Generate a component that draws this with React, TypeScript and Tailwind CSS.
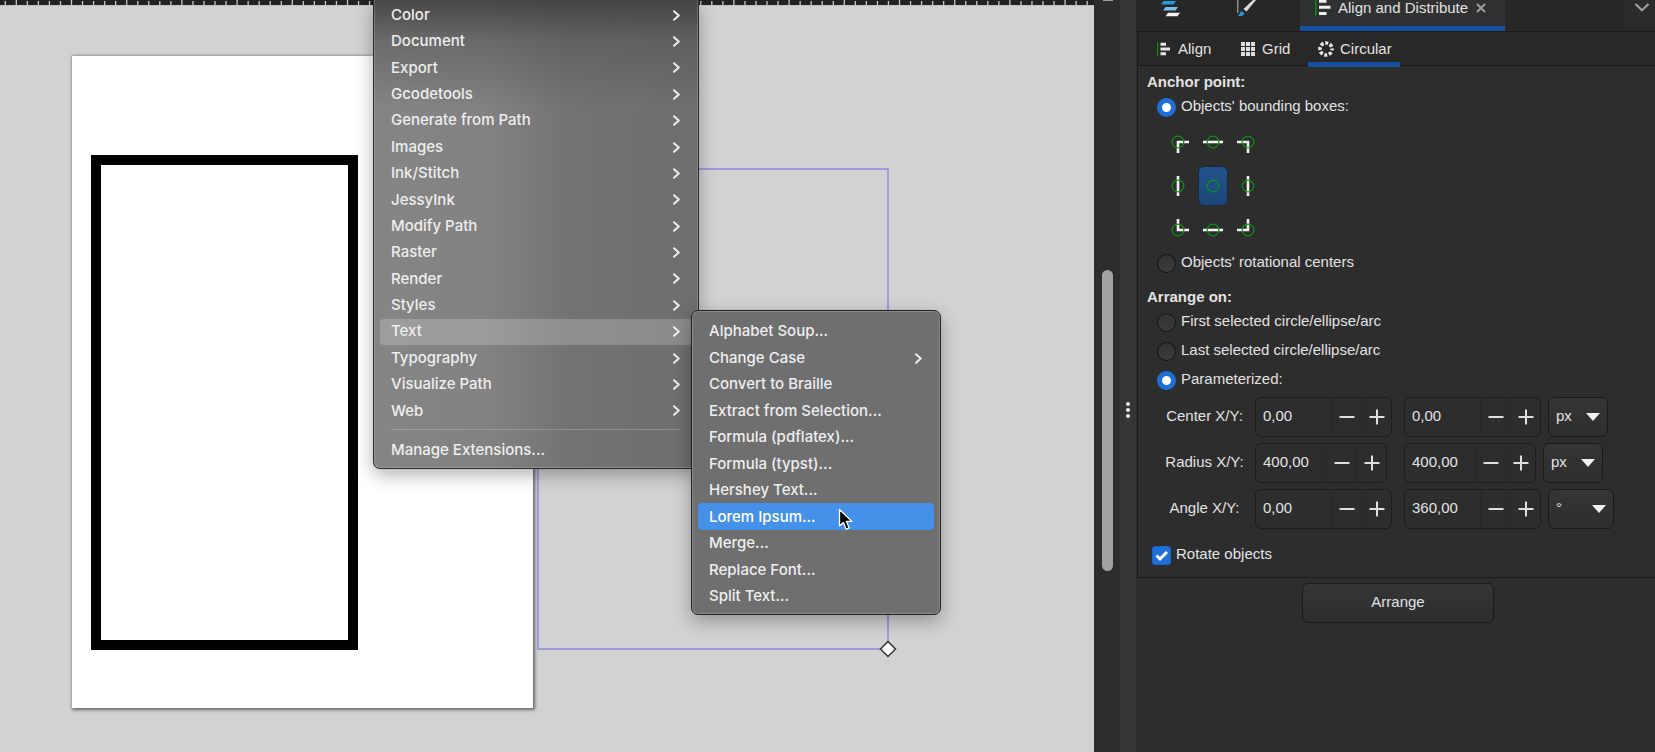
import React, { useState } from 'react';

const EXTENSION_MENU = [
  'Color', 'Document', 'Export', 'Gcodetools', 'Generate from Path', 'Images', 'Ink/Stitch', 'JessyInk',
  'Modify Path', 'Raster', 'Render', 'Styles', 'Text', 'Typography', 'Visualize Path', 'Web',
];

const TEXT_MENU = [
  'Alphabet Soup...', 'Change Case', 'Convert to Braille', 'Extract from Selection...',
  'Formula (pdflatex)...', 'Formula (typst)...', 'Hershey Text...', 'Lorem Ipsum...',
  'Merge...', 'Replace Font...', 'Split Text...',
];

// Strokes and circle centre of each anchor cell, in a 24x24 box
const ANCHORS = [
  { name: 'Top left', path: 'M12 23V12H23' },
  { name: 'Top', path: 'M2 12H22' },
  { name: 'Top right', path: 'M1 12H12V23' },
  { name: 'Left', path: 'M12 2V22' },
  { name: 'Center', path: '' },
  { name: 'Right', path: 'M12 2V22' },
  { name: 'Bottom left', path: 'M12 1V12H23' },
  { name: 'Bottom', path: 'M2 12H22' },
  { name: 'Bottom right', path: 'M1 12H12V1' },
];

function Ruler() {
  const ticks = Array.from({ length: 200 }, (_, i) => i);
  return (
    <svg className="block h-[6px] w-full bg-[#222222]" aria-hidden="true">
      {ticks.map(i => (
        <rect key={i} x={4.6 + i * 11.04} y={i % 5 === 1 ? 0 : 1} width="1.3" height="5" fill="#c8c8c8" />
      ))}
      <rect x="0" y="5" width="100%" height="1" fill="#c4c4c4" />
    </svg>
  );
}

function Chevron() {
  return (
    <svg className="h-[11px] w-[7px]" viewBox="0 0 7 11" fill="none" stroke="#ececec" strokeWidth="2" aria-hidden="true">
      <path d="M1 1.2L5.8 5.5L1 9.8" strokeLinecap="round" strokeLinejoin="round" />
    </svg>
  );
}

function MenuRow({ label, arrow, className }: { label: string; arrow?: boolean; className?: string }) {
  return (
    <button role="menuitem" className={`flex w-full items-center justify-between rounded-sm pl-[11px] pr-3 text-left ${className || ''}`}>
      <span>{label}</span>
      {arrow && <Chevron />}
    </button>
  );
}

function Canvas() {
  return (
    <main className="relative min-w-0 flex-1 overflow-hidden bg-[#d2d2d2]">
      <Ruler />
      <div className="absolute left-[72px] top-[56px] h-[652px] w-[461px] bg-white shadow-[1px_1px_3px_1px_rgba(0,0,0,0.5)]" />
      <div className="absolute left-[91px] top-[155px] h-[495px] w-[267px] border-[10px] border-black" />
      <div className="absolute left-[537px] top-[168px] h-[482px] w-[352px] border-2 border-[#9c9cdf]" />
      <svg className="absolute left-[879px] top-[640px] h-[18px] w-[18px]" viewBox="0 0 18 18" aria-hidden="true">
        <path d="M9 1.5L16.5 9L9 16.5L1.5 9Z" fill="#fff" stroke="#333" strokeWidth="1.5" />
      </svg>

      <div
        role="menu"
        className="absolute left-[373px] top-0 w-[326px] rounded-b-[7px] border border-t-0 border-[#2b2b2b] bg-[linear-gradient(180deg,rgba(60,60,60,0.85)_0px,rgba(80,80,80,0.5)_40px,rgba(112,112,112,0)_110px),linear-gradient(90deg,#858585_0%,#828282_35%,#727372_60%,#6e6e6e_100%)] px-1.5 pb-[5px] pt-0.5 font-['Inter',sans-serif] text-[15px] font-medium text-[#eeeeee] shadow-[inset_0_-1px_0_0_rgba(255,255,255,0.18),inset_1px_0_0_0_rgba(255,255,255,0.18),inset_-1px_0_0_0_rgba(255,255,255,0.18),0_6px_18px_rgba(0,0,0,0.3)]"
      >
        <div className="grid h-[422px] auto-rows-fr">
          {EXTENSION_MENU.map(label => (
            <MenuRow key={label} label={label} arrow className={label === 'Text' ? 'bg-white/20' : ''} />
          ))}
        </div>
        <div className="mx-[11px] mb-[7px] mt-[5px] h-px bg-white/20" />
        <MenuRow label="Manage Extensions..." className="h-[26px]" />
      </div>

      <div
        role="menu"
        className="absolute left-[691px] top-[310px] w-[250px] rounded-[7px] border border-[#222222] bg-[#6e6f6e] px-1.5 pb-[5px] pt-[7px] font-['Inter',sans-serif] text-[15px] font-medium text-[#eeeeee] shadow-[inset_0_0_0_1px_rgba(255,255,255,0.2),0_6px_18px_rgba(0,0,0,0.3)]"
      >
        <div className="grid h-[291px] auto-rows-fr">
          {TEXT_MENU.map(label => (
            <MenuRow
              key={label}
              label={label}
              arrow={label === 'Change Case'}
              className={label === 'Lorem Ipsum...' ? 'bg-[#4590e8] pt-px text-white' : 'pt-px'}
            />
          ))}
        </div>
      </div>

      <svg className="absolute left-[838px] top-[508px] h-[24px] w-[16px]" viewBox="0 0 16 24" aria-hidden="true">
        <path d="M1.5 1.5V18L5.4 14.6L8.2 21.2L11.2 20L8.4 13.4H13.8Z" fill="#000" stroke="#fff" strokeWidth="1.3" strokeLinejoin="round" />
      </svg>
    </main>
  );
}

function AlignIcon() {
  return (
    <svg className="h-[14px] w-[14px]" viewBox="0 0 14 14" aria-hidden="true">
      <rect x="0" y="0" width="1.2" height="14" fill="#0b8a12" />
      <path d="M3.5 .7H9V3.7H3.5ZM3.5 5.5H13V8.5H3.5ZM3.5 10.3H9V13.3H3.5Z" fill="#e6e6e6" />
    </svg>
  );
}

function Radio({ name, label, checked, onChange }: { name: string; label: string; checked: boolean; onChange: () => void }) {
  return (
    <label className="flex items-center gap-[5px]">
      <input
        type="radio"
        name={name}
        checked={checked}
        onChange={onChange}
        className="h-[19px] w-[19px] shrink-0 appearance-none rounded-full border border-[#141414] bg-linear-to-b from-[#333333] to-[#3b3b3b] checked:border-[5px] checked:border-[#1f6fd6] checked:bg-white checked:bg-none"
      />
      <span className="pb-[3px]">{label}</span>
    </label>
  );
}

function Spin({ label, value, inputClass }: { label: string; value: string; inputClass: string }) {
  return (
    <div className="flex h-10 rounded-md border border-[#1d1d1d] bg-[#2d2d2d]">
      <input aria-label={label} defaultValue={value} className={`bg-transparent pb-[3px] pl-[7px] outline-none ${inputClass}`} />
      <button aria-label={`Decrease ${label}`} className="flex w-[30px] items-center justify-center border-l border-[#272727]">
        <svg className="h-4 w-4" viewBox="0 0 16 16" aria-hidden="true"><path d="M.5 8H15.5" stroke="#dedede" strokeWidth="2" /></svg>
      </button>
      <button aria-label={`Increase ${label}`} className="flex w-[30px] items-center justify-center border-l border-[#272727]">
        <svg className="h-4 w-4" viewBox="0 0 16 16" aria-hidden="true"><path d="M.5 8H15.5M8 .5V15.5" stroke="#dedede" strokeWidth="2" /></svg>
      </button>
    </div>
  );
}

function Unit({ label, unit, selectClass }: { label: string; unit: string; selectClass: string }) {
  return (
    <div className="relative ml-[7px]">
      <select
        aria-label={label}
        className={`h-10 appearance-none rounded-md border border-[#1a1a1a] bg-linear-to-b from-[#353535] to-[#2e2e2e] pb-[3px] pl-[7px] outline-none ${selectClass}`}
      >
        <option>{unit}</option>
      </select>
      <svg className="pointer-events-none absolute right-2 top-4 h-2 w-[14px]" viewBox="0 0 14 8" aria-hidden="true">
        <path d="M0 0H14L7 8Z" fill="#f0f0f0" />
      </svg>
    </div>
  );
}

function DockTabs() {
  return (
    <div className="flex h-8 border-b border-[#1b1b1b] bg-[#272727]">
      <button aria-label="Objects" className="flex w-[77px] items-start pl-6">
        <svg className="h-[17px] w-5" viewBox="0 0 20 17" aria-hidden="true">
          <path d="M3.5 1H16L13.5 4.4H1Z" fill="#2598d8" />
          <path d="M5.5 7H18L15.5 10.4H3Z" fill="#74c0ea" />
          <path d="M8 12.8H20L17.5 16.2H5.5Z" fill="#f2f2f2" />
        </svg>
      </button>
      <button aria-label="Fill and Stroke" className="flex w-[87px] items-start pl-6">
        <svg className="h-[17px] w-5" viewBox="0 0 20 17" aria-hidden="true">
          <path d="M.8 0V13" stroke="#a8a8a8" strokeWidth="1.2" />
          <path d="M16 0H19L9.5 11.5L6.5 9Z" fill="#dadada" />
          <path d="M4.5 11L7.5 13.5L5.5 15.8Q3 16.8 .8 15.8Q3 14.5 3 12.5Z" fill="#2196d8" />
        </svg>
      </button>
      <div className="flex w-[205px] items-start border-b-[5px] border-[#1650a0] bg-[#2f3132] pl-[15px]">
        <svg className="h-4 w-[17px]" viewBox="0 0 17 16" aria-hidden="true">
          <rect x="0" y="0" width="1.5" height="15.5" fill="#0b8a12" />
          <path d="M4 0H11.5V2.7H4ZM4 5.8H15.5V8.8H4ZM4 12H11.5V15H4Z" fill="#f0f0f0" />
        </svg>
        <span className="ml-1.5 leading-4">Align and Distribute</span>
        <button aria-label="Close tab" className="ml-2 mt-[3px]">
          <svg className="h-[10px] w-[10px]" viewBox="0 0 10 10" aria-hidden="true">
            <path d="M1 1L9 9M9 1L1 9" stroke="#9c9c9c" strokeWidth="2" />
          </svg>
        </button>
      </div>
      <button aria-label="Dock menu" className="ml-auto flex h-[26px] w-[30px] items-start justify-center bg-[#2b2b2b] pl-1">
        <svg className="mt-[3px] h-[9px] w-4" viewBox="0 0 16 9" fill="none" aria-hidden="true">
          <path d="M1.5 1L8 7.3L14.5 1" stroke="#a0a0a0" strokeWidth="2" />
        </svg>
      </button>
    </div>
  );
}

function ArrangePanel() {
  const [anchor, setAnchor] = useState('boxes');
  const [target, setTarget] = useState('param');
  const [cell, setCell] = useState('Center');
  const [rotate, setRotate] = useState(true);

  return (
    <aside className="w-[519px] shrink-0 bg-[#2d2d2d] font-['Liberation_Sans',Arial,sans-serif] text-[15px] leading-[20px] text-[#e2e2e2]">
      <DockTabs />
      <section className="ml-px border-b border-l border-[#1b1b1b] pb-2.5">
        <nav className="flex h-[34px] border-b border-[#1b1b1b] bg-[#282828]">
          <button className="flex w-[84px] items-center gap-[7px] pl-[19px]"><AlignIcon />Align</button>
          <button className="flex w-[86px] items-center gap-[7px] pl-[19px]">
            <svg className="h-[14px] w-[14px]" viewBox="0 0 14 14" aria-hidden="true">
              <path d="M0 0H4V4H0ZM5 0H9V4H5ZM10 0H14V4H10ZM0 5H4V9H0ZM5 5H9V9H5ZM10 5H14V9H10ZM0 10H4V14H0ZM5 10H9V14H5ZM10 10H14V14H10Z" fill="#dedede" />
            </svg>
            Grid
          </button>
          <button className="flex h-[35px] w-[92px] items-center gap-1.5 border-b-[5px] border-[#1650a0] pl-[10px] pt-1">
            <svg className="h-4 w-4" viewBox="0 0 16 16" aria-hidden="true">
              <circle cx="8" cy="8" r="6" fill="none" stroke="#e6e6e6" strokeWidth="3.6" strokeDasharray="3 1.712" strokeDashoffset="1.5" />
            </svg>
            Circular
          </button>
        </nav>

        <div className="pl-[9px]">
          <h2 className="mt-1.5 font-bold">Anchor point:</h2>
          <div className="mt-1 pl-2.5">
            <Radio name="anchor" label="Objects' bounding boxes:" checked={anchor === 'boxes'} onChange={() => setAnchor('boxes')} />
            <div className="ml-[3px] mt-px grid w-[105px] grid-cols-3">
              {ANCHORS.map(({ name, path }) => (
                <button key={name} aria-label={name} onClick={() => setCell(name)} className="flex h-[44px] items-center justify-center">
                  <span
                    className={`flex h-10 w-[30px] items-center justify-center rounded-md ${cell === name ? 'border border-[#16283f] bg-linear-to-b from-[#23528c] to-[#1d4677]' : ''}`}
                  >
                    <svg className="h-6 w-6 shrink-0" viewBox="0 0 24 24" fill="none" aria-hidden="true">
                      {path && <path d={path} stroke="#f2f2f2" strokeWidth="2.6" />}
                      <circle cx="12" cy="12" r="5.8" stroke="#0a9612" strokeWidth="1.2" />
                    </svg>
                  </span>
                </button>
              ))}
            </div>
            <Radio name="anchor" label="Objects' rotational centers" checked={anchor === 'centers'} onChange={() => setAnchor('centers')} />
          </div>

          <h2 className="mt-3 font-bold">Arrange on:</h2>
          <div className="mt-1 flex flex-col gap-1.5 pl-2.5">
            <Radio name="target" label="First selected circle/ellipse/arc" checked={target === 'first'} onChange={() => setTarget('first')} />
            <Radio name="target" label="Last selected circle/ellipse/arc" checked={target === 'last'} onChange={() => setTarget('last')} />
            <Radio name="target" label="Parameterized:" checked={target === 'param'} onChange={() => setTarget('param')} />
          </div>

          <div className="mt-[5px] grid grid-cols-[108px_149px_1fr] items-center gap-y-1.5">
            <span className="pb-[3px] pl-[7px] text-center">Center X/Y:</span>
            <div className="flex"><Spin label="Center X" value="0,00" inputClass="w-[75px]" /></div>
            <div className="flex">
              <Spin label="Center Y" value="0,00" inputClass="w-[75px]" />
              <Unit label="Center unit" unit="px" selectClass="w-[60px]" />
            </div>

            <span className="pb-[3px] pl-[7px] text-center">Radius X/Y:</span>
            <div className="flex"><Spin label="Radius X" value="400,00" inputClass="w-[70px]" /></div>
            <div className="flex">
              <Spin label="Radius Y" value="400,00" inputClass="w-[70px]" />
              <Unit label="Radius unit" unit="px" selectClass="w-[60px]" />
            </div>

            <span className="pb-[3px] pl-[7px] text-center">Angle X/Y:</span>
            <div className="flex"><Spin label="Angle X" value="0,00" inputClass="w-[75px]" /></div>
            <div className="flex">
              <Spin label="Angle Y" value="360,00" inputClass="w-[75px]" />
              <Unit label="Angle unit" unit="°" selectClass="w-[66px]" />
            </div>
          </div>

          <label className="mt-[15px] flex items-center gap-[5px] pl-[5px]">
            <span className="relative flex">
              <input
                type="checkbox"
                checked={rotate}
                onChange={e => setRotate(e.target.checked)}
                className="peer h-[19px] w-[19px] appearance-none rounded-[3px] border border-[#141414] checked:border-[#1b64c4] checked:bg-[#1f6fd6]"
              />
              <svg className="pointer-events-none absolute inset-0 hidden h-[19px] w-[19px] peer-checked:block" viewBox="0 0 19 19" fill="none" aria-hidden="true">
                <path d="M4.5 9.5L8 13L15 6" stroke="#fff" strokeWidth="3" />
              </svg>
            </span>
            <span className="pb-[3px]">Rotate objects</span>
          </label>
        </div>
      </section>

      <div className="flex justify-center pl-[5px] pt-[5px]">
        <button className="h-10 w-[192px] rounded-md border border-[#1a1a1a] bg-linear-to-b from-[#353535] to-[#2e2e2e] pb-[3px]">Arrange</button>
      </div>
    </aside>
  );
}

export default function App() {
  return (
    <div className="flex h-screen overflow-hidden bg-[#2d2d2d]">
      <Canvas />
      {/* Canvas scrollbar */}
      <div className="flex w-[26px] shrink-0 flex-col items-center bg-[#2d2d2d] pl-px">
        <div className="h-px w-[10px] bg-[#a1a1a1]" />
        <div className="mt-[269px] h-[301px] w-[11px] shrink-0 rounded-full bg-[#a1a1a1]" />
      </div>
      {/* Dock resize handle */}
      <div className="flex w-4 shrink-0 flex-col items-center gap-0.5 bg-[#353535] pt-[402px]">
        <span className="h-1 w-1 rounded-full bg-[#eeeeee]" />
        <span className="h-1 w-1 rounded-full bg-[#eeeeee]" />
        <span className="h-1 w-1 rounded-full bg-[#eeeeee]" />
      </div>
      <ArrangePanel />
    </div>
  );
}
